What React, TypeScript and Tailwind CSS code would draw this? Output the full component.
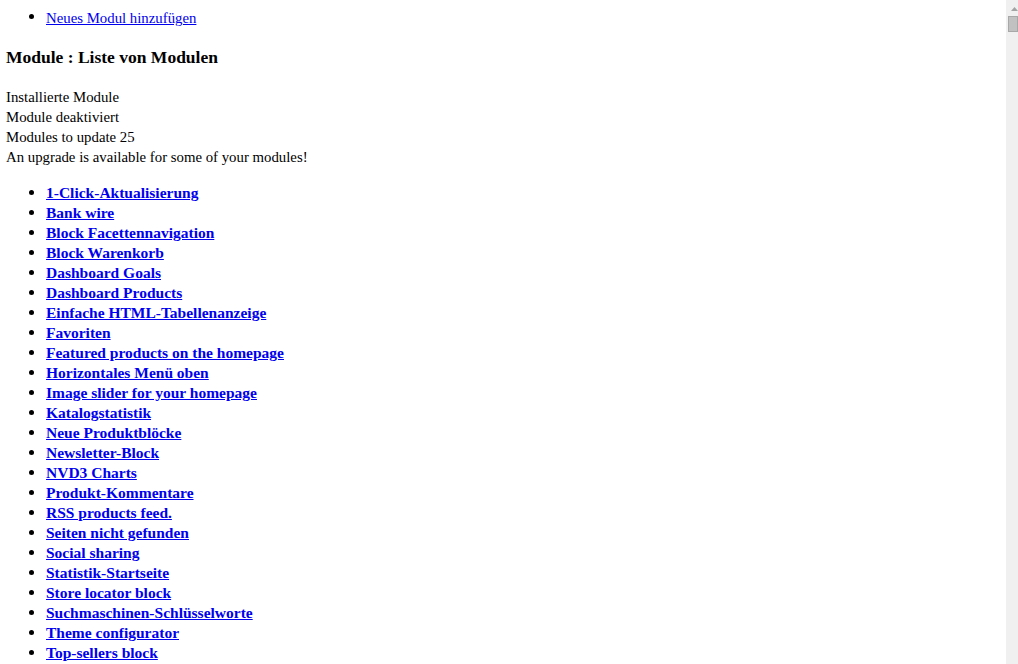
const modules = [
  "1-Click-Aktualisierung",
  "Bank wire",
  "Block Facettennavigation",
  "Block Warenkorb",
  "Dashboard Goals",
  "Dashboard Products",
  "Einfache HTML-Tabellenanzeige",
  "Favoriten",
  "Featured products on the homepage",
  "Horizontales Menü oben",
  "Image slider for your homepage",
  "Katalogstatistik",
  "Neue Produktblöcke",
  "Newsletter-Block",
  "NVD3 Charts",
  "Produkt-Kommentare",
  "RSS products feed.",
  "Seiten nicht gefunden",
  "Social sharing",
  "Statistik-Startseite",
  "Store locator block",
  "Suchmaschinen-Schlüsselworte",
  "Theme configurator",
  "Top-sellers block",
  "Verfügbare Mengen",
  "Web-Service",
  "Zahlung per Scheck",
];

function Bullet({ top }: { top: string }) {
  return (
    <span className="w-[17px] shrink-0">
      <span className={`block w-[5px] h-[5px] rounded-full bg-black ${top}`} />
    </span>
  );
}

// mimics the browser's page scrollbar in the screenshot
function Scrollbar() {
  return (
    <div className="fixed right-0 top-0 h-screen w-[12px] bg-[#f0f0f0]">
      <svg className="absolute left-[5px] top-[7px]" width="7" height="4" viewBox="0 0 7 4">
        <polygon points="3.5,0 7,4 0,4" fill="#a3a3a3" />
      </svg>
      <div className="absolute left-[2px] top-[16px] w-[10px] h-[16px] bg-[#c1c1c1] border border-[#a8a8a8]" />
    </div>
  );
}

export default function App() {
  return (
    <div className="bg-white text-black px-[6px] pt-[8px] pb-[40px] font-['Liberation_Serif','Times_New_Roman',serif] text-[14.8px] leading-[20px]">
      <ul className="pl-[23px]">
        <li className="flex">
          <Bullet top="mt-[6px]" />
          <a href="#" className="text-[#0000ee] underline">
            Neues Modul hinzufügen
          </a>
        </li>
      </ul>

      <h3 className="text-[17.5px] font-bold leading-[20px] mt-[19px] mb-[20px]">Module : Liste von Modulen</h3>

      <div>Installierte Module</div>
      <div>Module deaktiviert</div>
      <div>Modules to update 25</div>
      <div>An upgrade is available for some of your modules!</div>

      <ul className="pl-[23px] mt-[16px] mb-[16px]">
        {modules.map((m) => (
          <li key={m} className="flex">
            <Bullet top="mt-[7px]" />
            <a href="#" className="text-[#0000ee] underline font-bold text-[15.5px]">
              {m}
            </a>
          </li>
        ))}
      </ul>

      <Scrollbar />
    </div>
  );
}
